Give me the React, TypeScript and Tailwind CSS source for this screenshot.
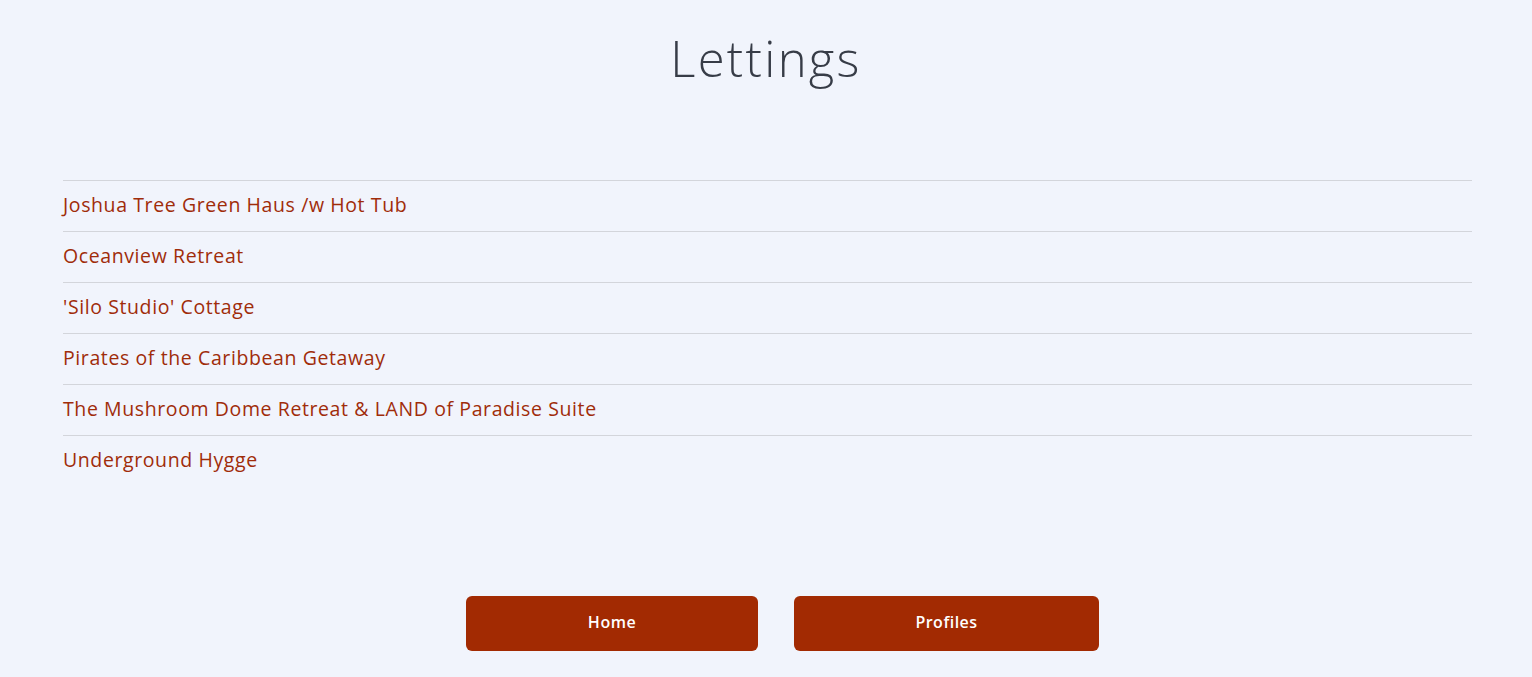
import React from 'react'

const lettings = [
  'Joshua Tree Green Haus /w Hot Tub',
  'Oceanview Retreat',
  "'Silo Studio' Cottage",
  'Pirates of the Caribbean Getaway',
  'The Mushroom Dome Retreat & LAND of Paradise Suite',
  'Underground Hygge',
]

export default function App() {
  return (
    <div className="min-h-[677px] bg-[#f1f4fc] font-['Open_Sans',sans-serif]">
      <h1 className="pt-[26px] text-center text-[49px] font-light leading-[64px] tracking-[2.3px] text-[#373c47]">Lettings</h1>
      <ul className="ml-[63px] mr-[60px] mt-[90px]">
        {lettings.map(name => (
          <li key={name} className="border-t border-[#d3d5db]">
            <a href="#" className="flex h-[50px] items-center pb-[2px] text-[19.5px] tracking-[0.6px] text-[#a02c0a]">{name}</a>
          </li>
        ))}
      </ul>
      <div className="mt-[110px] flex justify-center gap-9 pl-[33px]">
        <button className="h-[55px] w-[292px] rounded-md bg-[#a22a02] pb-[3px] text-[16px] font-semibold tracking-[0.5px] text-white">Home</button>
        <button className="h-[55px] w-[305px] rounded-md bg-[#a22a02] pb-[3px] text-[16px] font-semibold tracking-[0.5px] text-white">Profiles</button>
      </div>
    </div>
  )
}
